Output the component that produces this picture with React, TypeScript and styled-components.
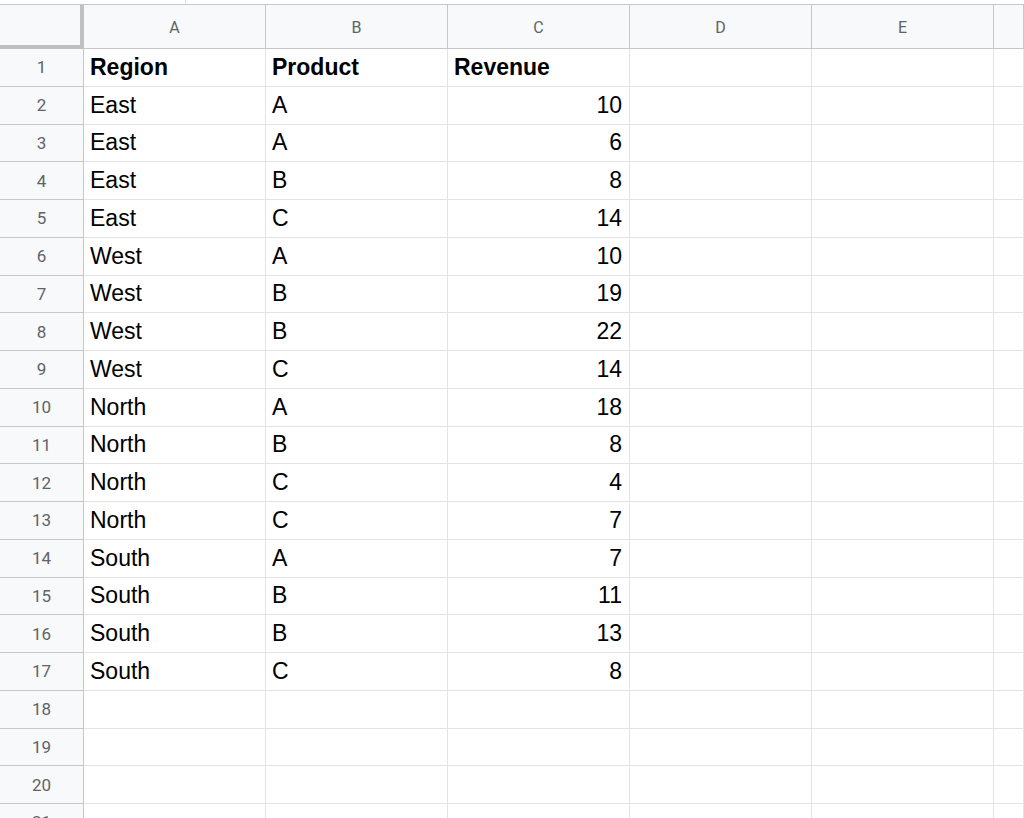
import React from "react";
import styled, { createGlobalStyle } from "styled-components";

const Global = createGlobalStyle`
  body { margin: 0; background: #fff; overflow: hidden; }
`;

const Top = styled.div`
  height: 4px;
  display: flex;
`;
const TopSeg = styled.div`
  width: 185px;
  border-right: 1px solid #e2e3e3;
`;

const Grid = styled.div`
  display: grid;
  grid-template-columns: 84px repeat(5, 182px) 1fr;
  grid-template-rows: 44px;
  grid-auto-rows: 37.75px;
  border-top: 1px solid #c7c7c7;
  font-family: "Liberation Sans", Arial, sans-serif;
`;

const Corner = styled.div`
  background: #f8f9fa;
  border-right: 4px solid #c0c0c0;
  border-bottom: 4px solid #c0c0c0;
`;

const ColHead = styled.div`
  background: #f8f9fa;
  border-right: 1px solid #c7c7c7;
  border-bottom: 1px solid #c7c7c7;
  color: #5f6368;
  font-family: Roboto, sans-serif;
  font-size: 16px;
  display: flex;
  align-items: center;
  justify-content: center;
  padding-top: 1px;
`;

const RowHead = styled.div`
  background: #f8f9fa;
  border-right: 1px solid #c7c7c7;
  border-bottom: 1px solid #c7c7c7;
  color: #5f6368;
  font-family: Roboto, sans-serif;
  font-size: 17px;
  display: flex;
  align-items: center;
  justify-content: center;
`;

const Cell = styled.div<{ $right?: boolean; $bold?: boolean }>`
  border-right: 1px solid #e2e3e3;
  border-bottom: 1px solid #e2e3e3;
  font-size: 23px;
  font-weight: ${(p) => (p.$bold ? 700 : 400)};
  color: #000;
  display: flex;
  align-items: center;
  justify-content: ${(p) => (p.$right ? "flex-end" : "flex-start")};
  padding: 0 7px 0 6px;
  white-space: nowrap;
  overflow: hidden;
`;

const data: [string, string, number][] = [
  ["East", "A", 10], ["East", "A", 6], ["East", "B", 8], ["East", "C", 14],
  ["West", "A", 10], ["West", "B", 19], ["West", "B", 22], ["West", "C", 14],
  ["North", "A", 18], ["North", "B", 8], ["North", "C", 4], ["North", "C", 7],
  ["South", "A", 7], ["South", "B", 11], ["South", "B", 13], ["South", "C", 8],
];

export default function App() {
  const rows: React.ReactNode[] = [];
  for (let r = 1; r <= 21; r++) {
    rows.push(<RowHead key={"h" + r}>{r}</RowHead>);
    let a = "", b = "", c = "";
    let bold = false;
    if (r === 1) { a = "Region"; b = "Product"; c = "Revenue"; bold = true; }
    else if (r - 2 < data.length) { const d = data[r - 2]; a = d[0]; b = d[1]; c = String(d[2]); }
    rows.push(<Cell key={"a" + r} $bold={bold}>{a}</Cell>);
    rows.push(<Cell key={"b" + r} $bold={bold}>{b}</Cell>);
    rows.push(<Cell key={"c" + r} $bold={bold} $right={!bold}>{c}</Cell>);
    rows.push(<Cell key={"d" + r} />);
    rows.push(<Cell key={"e" + r} />);
    rows.push(<Cell key={"f" + r} />);
  }
  return (
    <>
      <Global />
      <Top><TopSeg /></Top>
      <Grid>
        <Corner />
        {["A", "B", "C", "D", "E", ""].map((l, i) => (
          <ColHead key={i}>{l}</ColHead>
        ))}
        {rows}
      </Grid>
    </>
  );
}
